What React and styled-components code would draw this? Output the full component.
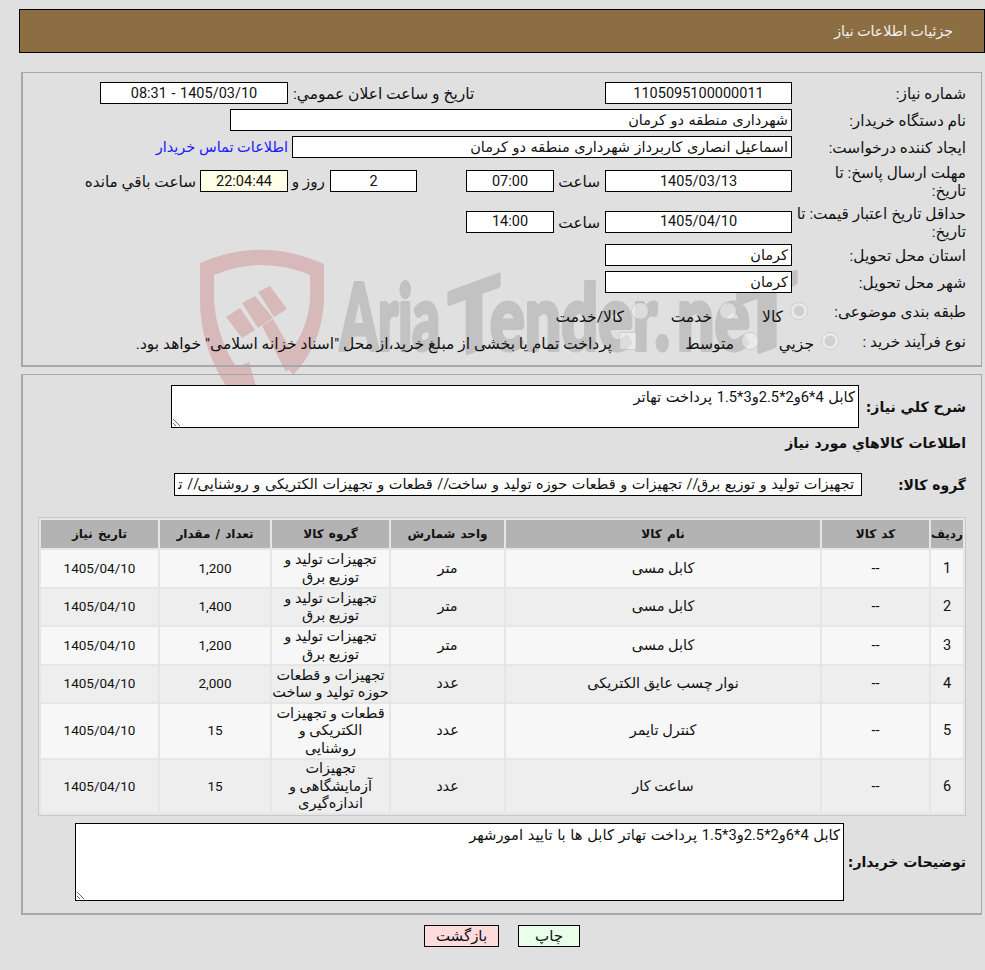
import React from 'react';
import styled, { createGlobalStyle } from 'styled-components';

const bodyFont = 'Roboto, "DejaVu Sans", sans-serif';

const Global = createGlobalStyle`
  html, body {
    margin: 0;
    padding: 0;
    background: #e0e0e0;
  }
  body {
    font-family: ${bodyFont};
    font-size: 14.5px;
    color: #111;
  }
`;

const Page = styled.div`
  position: relative;
  width: 985px;
  height: 970px;
  overflow: hidden;
  direction: rtl;
  padding-top: 9px;
  box-sizing: border-box;
`;

const Watermark = styled.svg`
  position: absolute;
  left: 0;
  top: 0;
  width: 985px;
  height: 970px;
`;

const Header = styled.header`
  position: relative;
  height: 44px;
  margin-left: 19px;
  padding-right: 31px;
  display: flex;
  align-items: center;
  background: #8d6e42;
  border: 1px solid #000;
  box-sizing: border-box;
  color: #f2f2f2;
  font-size: 14.2px;
`;

const Panel = styled.section`
  position: relative;
  box-sizing: border-box;
  width: 961px;
  height: ${props => props.$h}px;
  margin: ${props => props.$top}px 3px 0 0;
  padding: ${props => props.$pad}px 15px 0 0;
  border: 1px solid #a8a8a8;
  border-width: 1px 1px 2px 2px;
`;

const Rows = styled.div`
  display: flex;
  flex-direction: column;
  gap: 5px;
`;

const Row = styled.div`
  display: flex;
  align-items: center;
  height: ${props => props.$h || 22}px;
  margin-top: ${props => props.$mt || 0}px;
`;

const Label = styled.div`
  width: ${props => props.$w || 174}px;
  flex: none;
  font-size: 15.3px;
  line-height: 18px;
  white-space: nowrap;
  position: relative;
  top: 1px;
`;

const SideLabel = styled.div`
  flex: none;
  width: 317px;
  padding-left: 5px;
  box-sizing: border-box;
  font-size: 15.5px;
  text-align: left;
  position: relative;
  top: 1px;
`;

const Caption = styled.span`
  flex: none;
  margin: 0 ${props => props.$r ?? 5}px 0 ${props => props.$l ?? 5}px;
  width: ${props => props.$w ? `${props.$w}px` : 'auto'};
  font-size: 15.3px;
  white-space: nowrap;
  position: relative;
  top: 1px;
`;

const Field = styled.input`
  flex: none;
  box-sizing: border-box;
  width: ${props => props.$w}px;
  height: ${props => props.$h || 22}px;
  padding: 0 ${props => props.$pr || 3}px 0 3px;
  margin: 0;
  border: 1px solid #000;
  outline: none;
  border-radius: 0;
  background: ${props => props.$bg || '#fff'};
  color: #111;
  font: 14.5px ${bodyFont};
  word-spacing: 1px;
  text-align: ${props => props.$center ? 'center' : 'right'};
`;

const ContactLink = styled.a`
  margin-right: 4px;
  color: #1a1aff;
  text-decoration: none;
`;

const Option = styled.label`
  flex: none;
  display: flex;
  align-items: center;
  width: ${props => props.$w ? `${props.$w}px` : 'auto'};
`;

const OptionText = styled.span`
  margin-right: 7px;
  font-size: 15.5px;
  position: relative;
  top: ${props => props.$drop || 0}px;
`;

const Check = styled.input`
  flex: none;
  width: 18px;
  height: 18px;
  margin: 0;
  opacity: 0.75;
`;

const SectionLabel = styled.div`
  flex: none;
  width: ${props => props.$w}px;
  font-family: "DejaVu Sans", sans-serif;
  font-size: 14px;
  font-weight: bold;
`;

const SectionTitle = styled.h2`
  margin: 0;
  font-family: "DejaVu Sans", sans-serif;
  font-size: 14px;
  font-weight: bold;
  line-height: 22px;
`;

const Area = styled.textarea`
  flex: none;
  box-sizing: border-box;
  display: block;
  width: ${props => props.$w}px;
  height: ${props => props.$h}px;
  margin: 0;
  padding: 2px 3px;
  border: 1px solid #000;
  outline: none;
  border-radius: 0;
  background: #fff;
  color: #111;
  font: 14.7px ${bodyFont};
  word-spacing: 1px;
`;

const Table = styled.table`
  box-sizing: border-box;
  width: 928px;
  margin-top: 21px;
  table-layout: fixed;
  border-collapse: separate;
  border-spacing: 2px;
  background: #e6e6e6;
  border: 1px solid #c8c8c8;
`;

const Th = styled.th`
  height: 28px;
  padding: 0;
  background: #b3b3b3;
  font-family: "DejaVu Sans", sans-serif;
  font-size: 12px;
  font-weight: bold;
  word-spacing: 1px;
  color: #111;
`;

const Td = styled.td`
  padding: 0;
  height: ${props => props.$h}px;
  text-align: center;
  line-height: 17.5px;
  font-size: ${props => props.$num ? 13.5 : 14.5}px;
  background: ${props => props.$odd ? '#f7f7f7' : '#eeeeee'};
`;

const Buttons = styled.div`
  position: relative;
  display: flex;
  justify-content: center;
  gap: 19px;
  margin-top: 10px;
  padding-left: 19px;
`;

const Button = styled.button`
  box-sizing: border-box;
  width: ${props => props.$w}px;
  height: 22px;
  padding: 0;
  border: 1px solid #000;
  border-radius: 0;
  background: ${props => props.$bg};
  color: #111;
  font: 15px ${bodyFont};
`;

const columns = [32, 107, 314, 113, 117, 110, 117];
const headers = ['ردیف', 'کد کالا', 'نام کالا', 'واحد شمارش', 'گروه کالا', 'تعداد / مقدار', 'تاریخ نیاز'];

const items = [
  { id: 1, name: 'کابل مسی', unit: 'متر', group: 'تجهیزات تولید و توزیع برق', qty: '1,200', h: 37 },
  { id: 2, name: 'کابل مسی', unit: 'متر', group: 'تجهیزات تولید و توزیع برق', qty: '1,400', h: 36 },
  { id: 3, name: 'کابل مسی', unit: 'متر', group: 'تجهیزات تولید و توزیع برق', qty: '1,200', h: 37 },
  { id: 4, name: 'نوار چسب عایق الکتریکی', unit: 'عدد', group: 'تجهیزات و قطعات حوزه تولید و ساخت', qty: '2,000', h: 36 },
  { id: 5, name: 'کنترل تایمر', unit: 'عدد', group: 'قطعات و تجهیزات الکتریکی و روشنایی', qty: '15', h: 54 },
  { id: 6, name: 'ساعت کار', unit: 'عدد', group: 'تجهیزات آزمایشگاهی و اندازه‌گیری', qty: '15', h: 53 },
];

const cableText = 'کابل 4*6و2*2.5و3*1.5 پرداخت تهاتر';

const markText = {
  fill: '#c2c2c2',
  stroke: '#c2c2c2',
  strokeWidth: 4,
  strokeLinejoin: 'round',
  fontFamily: 'Lato, sans-serif',
  fontWeight: 900,
  fontSize: 92,
  lengthAdjust: 'spacingAndGlyphs',
  direction: 'ltr',
};

function Mark() {
  return (
    <Watermark viewBox="0 0 985 970" aria-hidden="true">
      <path
        fill="#d8b9ba"
        fillRule="evenodd"
        d="M200 263 Q262 236 324 264 L324 300 Q322 345 293 375 L282 360 Q308 335 310 298 L310 275 Q262 255 214 275 L214 300 Q216 335 236 367 L249 362 L256 386 L226 386 Q200 345 200 300 Z"
      />
      <path fill="#d8b9ba" d="M226 317 L240 308 L255 330 L242 338 Z" />
      <path fill="#d8b9ba" d="M242 303 L255 296 L273 318 L258 328 Z" />
      <path fill="#d8b9ba" d="M258 292 L270 286 L287 309 L274 317 Z" />
      <path fill="#d8b9ba" d="M262 326 L273 319 L298 362 L286 372 Z" />
      <text x="340" y="350" textLength="100" {...markText}>Aria</text>
      <text transform="translate(448 360) skewY(-20)" textLength="52" {...markText}>T</text>
      <text x="490" y="350" textLength="180" {...markText}>ender.</text>
      <text x="677" y="350" textLength="73" {...markText}>ne</text>
      <text transform="translate(737 360) skewY(-20)" textLength="60" {...markText}>T</text>
    </Watermark>
  );
}

export default function App() {
  return (
    <Page>
      <Global />
      <Mark />
      <Header>جزئیات اطلاعات نیاز</Header>

      <Panel $h={295} $top={19} $pad={9}>
        <Rows>
          <Row>
            <Label>شماره نیاز:</Label>
            <Field $w={187} $center readOnly value="1105095100000011" />
            <SideLabel>تاریخ و ساعت اعلان عمومي:</SideLabel>
            <Field $w={188} $center readOnly value="1405/03/10 - 08:31" />
          </Row>
          <Row>
            <Label>نام دستگاه خریدار:</Label>
            <Field $w={562} readOnly value="شهرداری منطقه دو کرمان" />
          </Row>
          <Row>
            <Label>ایجاد کننده درخواست:</Label>
            <Field $w={500} readOnly value="اسماعیل انصاری کاربرداز شهرداری منطقه دو کرمان" />
            <ContactLink href="#">اطلاعات تماس خریدار</ContactLink>
          </Row>
          <Row $h={36}>
            <Label>مهلت ارسال پاسخ: تا<br />تاریخ:</Label>
            <Field $w={187} $center readOnly value="1405/03/13" />
            <Caption $w={41}>ساعت</Caption>
            <Field $w={88} $center readOnly value="07:00" />
            <Caption $w={39} />
            <Field $w={87} $center readOnly value="2" />
            <Caption $w={32}>روز و</Caption>
            <Field $w={88} $center $bg="#ffffe8" readOnly value="22:04:44" />
            <Caption $r={4}>ساعت باقي مانده</Caption>
          </Row>
          <Row $h={35}>
            <Label>حداقل تاریخ اعتبار قیمت: تا<br />تاریخ:</Label>
            <Field $w={187} $center readOnly value="1405/04/10" />
            <Caption $w={41}>ساعت</Caption>
            <Field $w={88} $center readOnly value="14:00" />
          </Row>
          <Row>
            <Label>استان محل تحویل:</Label>
            <Field $w={187} readOnly value="کرمان" />
          </Row>
          <Row>
            <Label>شهر محل تحویل:</Label>
            <Field $w={187} readOnly value="کرمان" />
          </Row>
          <Row $h={25}>
            <Label $w={158}>طبقه بندی موضوعی:</Label>
            <Option $w={71}><Check type="radio" name="kind" disabled defaultChecked /><OptionText $drop={6}>کالا</OptionText></Option>
            <Option $w={88}><Check type="radio" name="kind" disabled /><OptionText $drop={6}>خدمت</OptionText></Option>
            <Option><Check type="radio" name="kind" disabled /><OptionText $drop={6}>کالا/خدمت</OptionText></Option>
          </Row>
          <Row $h={25}>
            <Label $w={127}>نوع فرآیند خرید :</Label>
            <Option $w={80}><Check type="radio" name="buy" disabled defaultChecked /><OptionText $drop={3}>جزيي</OptionText></Option>
            <Option $w={122}><Check type="radio" name="buy" disabled /><OptionText $drop={3}>متوسط</OptionText></Option>
            <Option><Check type="checkbox" disabled /><OptionText $drop={3}>پرداخت تمام یا بخشی از مبلغ خرید،از محل "اسناد خزانه اسلامی" خواهد بود.</OptionText></Option>
          </Row>
        </Rows>
      </Panel>

      <Panel $h={541} $top={7} $pad={10}>
        <Row $h={43}>
          <SectionLabel $w={107}>شرح کلي نیاز:</SectionLabel>
          <Area $w={688} $h={43} readOnly value={cableText} />
        </Row>
        <Row $mt={4}>
          <SectionTitle>اطلاعات کالاهاي مورد نیاز</SectionTitle>
        </Row>
        <Row $h={23} $mt={19}>
          <SectionLabel $w={104}>گروه کالا:</SectionLabel>
          <Field $w={688} $h={23} $pr={7} readOnly value="تجهیزات تولید و توزیع برق// تجهیزات و قطعات حوزه تولید و ساخت// قطعات و تجهیزات الکتریکی و روشنایی// تجهیزات آزمایشگاهی و اندازه‌گیری" />
        </Row>
        <Table>
          <colgroup>
            {columns.map((w, i) => <col key={i} style={{ width: w }} />)}
          </colgroup>
          <thead>
            <tr>{headers.map(h => <Th key={h}>{h}</Th>)}</tr>
          </thead>
          <tbody>
            {items.map((item, i) => (
              <tr key={item.id}>
                <Td $h={item.h} $odd={i % 2 === 0}>{item.id}</Td>
                <Td $h={item.h} $odd={i % 2 === 0}>--</Td>
                <Td $h={item.h} $odd={i % 2 === 0}>{item.name}</Td>
                <Td $h={item.h} $odd={i % 2 === 0}>{item.unit}</Td>
                <Td $h={item.h} $odd={i % 2 === 0}>{item.group}</Td>
                <Td $h={item.h} $odd={i % 2 === 0} $num>{item.qty}</Td>
                <Td $h={item.h} $odd={i % 2 === 0} $num>1405/04/10</Td>
              </tr>
            ))}
          </tbody>
        </Table>
        <Row $h={78} $mt={7}>
          <SectionLabel $w={122}>توضیحات خریدار:</SectionLabel>
          <Area $w={769} $h={78} readOnly value={`${cableText} کابل ها با تایید امورشهر`} />
        </Row>
      </Panel>

      <Buttons>
        <Button $w={62} $bg="#e9ffe9">چاپ</Button>
        <Button $w={75} $bg="#ffdcdc">بازگشت</Button>
      </Buttons>
    </Page>
  );
}
